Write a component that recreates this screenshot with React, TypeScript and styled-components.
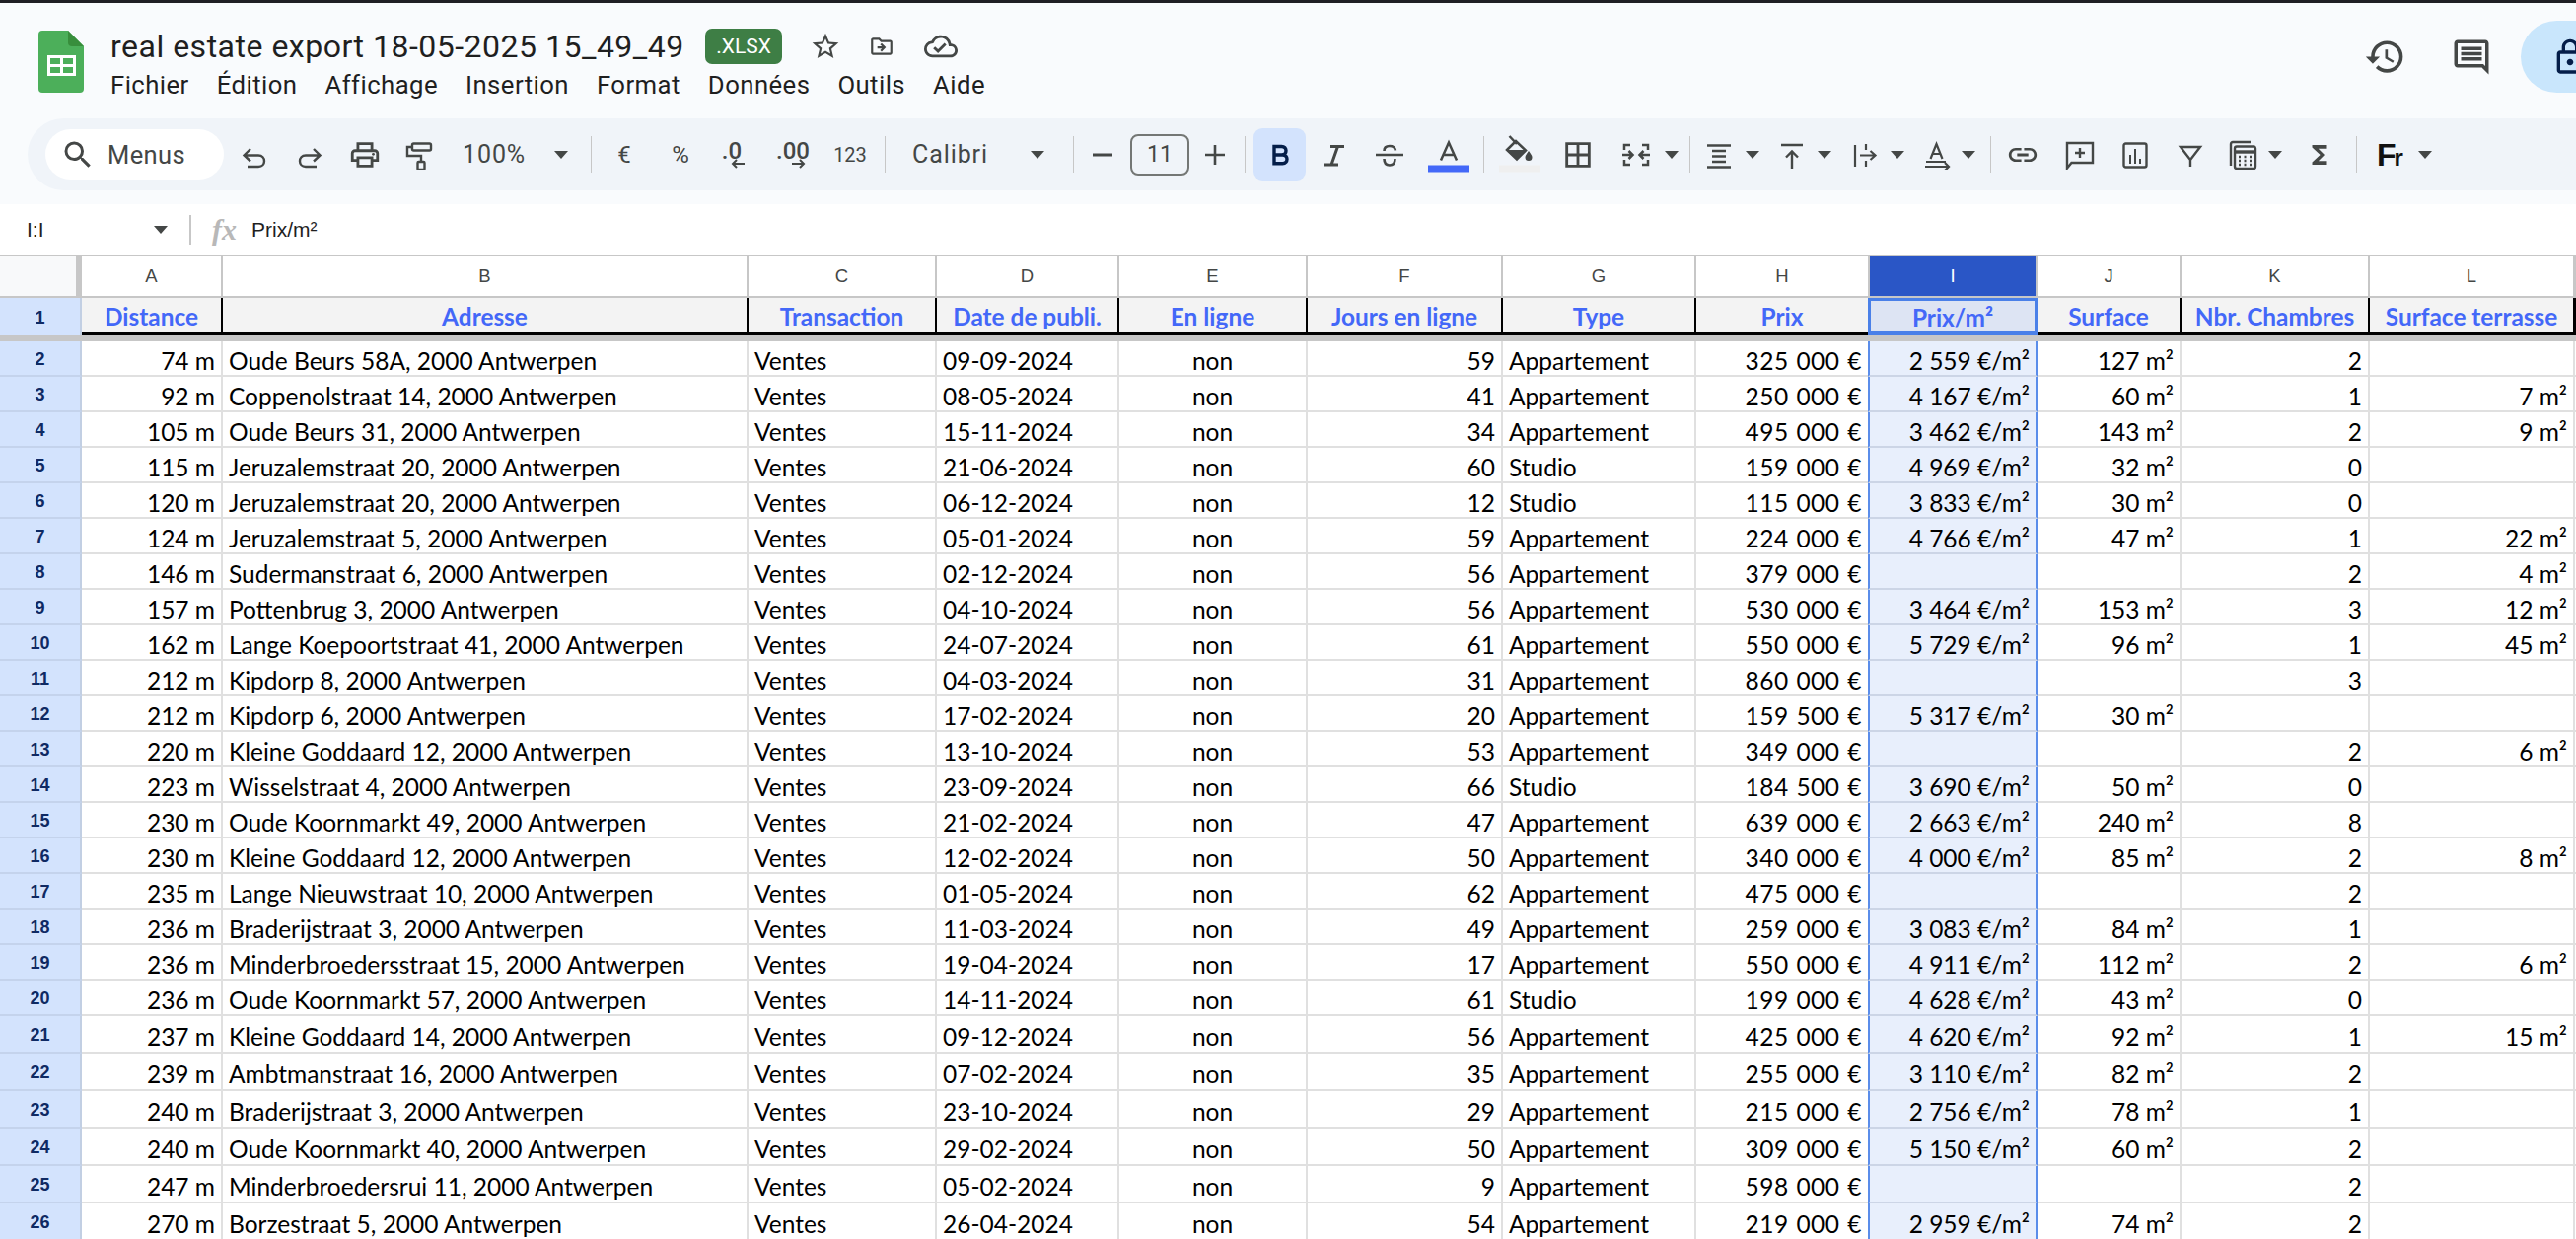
import React from 'react'
import styled, { createGlobalStyle } from 'styled-components'
import {
  MdHistory,
  MdLink,
  MdOutlineCloudDone,
  MdOutlineComment,
  MdOutlineDriveFileMove,
  MdOutlineLock,
  MdOutlinePrint,
  MdBorderAll,
  MdFunctions,
  MdSearch,
  MdStarBorder,
} from 'react-icons/md'

const UI_FONT = `Roboto, 'Liberation Sans', sans-serif`
const CELL_FONT = `Lato, 'Liberation Sans', sans-serif`
const ICON_COLOR = '#444746'
const GRID_COLUMNS = '83px 143px 533px 191px 185px 191px 198px 196px 176px 170px 146px 191px 208px 1fr'

const GlobalStyle = createGlobalStyle`
  html, body {
    margin: 0;
    padding: 0;
    background: #fff;
    overflow: hidden;
  }
`

const Page = styled.div`
  width: 2612px;
  height: 1256px;
  overflow: hidden;
  display: flex;
  flex-direction: column;
  background: #fff;
  border-top: 3px solid #1f1f24;
  box-sizing: border-box;
`

/* title bar */
const Header = styled.header`
  height: 117px;
  flex: none;
  display: flex;
  background: #f9fbfd;
  padding-left: 39px;
`

const LogoWrap = styled.div`
  margin-top: 28px;
  margin-right: 27px;
  width: 46px;
  height: 63px;
`

const TitleBlock = styled.div`
  padding-top: 26px;
  display: flex;
  flex-direction: column;
`

const TitleRow = styled.div`
  height: 36px;
  display: flex;
  align-items: center;
`

const Title = styled.div`
  width: 582px;
  margin-right: 21px;
  font: 400 32px ${UI_FONT};
  letter-spacing: 0.5px;
  color: #1f1f1f;
  white-space: nowrap;
`

const Chip = styled.div`
  width: 78px;
  height: 36px;
  border-radius: 7px;
  background: #3e7e45;
  color: #fff;
  font: 400 21px ${UI_FONT};
  display: flex;
  align-items: center;
  justify-content: center;
`

const TitleIcon = styled.div<{ $w: number }>`
  width: ${(p) => p.$w}px;
  display: flex;
  justify-content: center;
  color: ${ICON_COLOR};
  svg {
    display: block;
  }
`

const MenuRow = styled.nav`
  margin-top: 3px;
  height: 36px;
  display: flex;
  align-items: center;
  gap: 28px;
`

const MenuItem = styled.span`
  font: 400 25.7px ${UI_FONT};
  letter-spacing: 0.45px;
  color: #1f1f1f;
`

const HeaderRight = styled.div`
  margin-left: auto;
  display: flex;
  align-items: flex-start;
  padding-top: 18px;
`

const HeaderAction = styled.div<{ $w: number }>`
  width: ${(p) => p.$w}px;
  height: 73px;
  display: flex;
  align-items: center;
  justify-content: center;
  color: ${ICON_COLOR};
`

const SharePill = styled.div`
  width: 56px;
  height: 73px;
  padding-left: 30px;
  box-sizing: border-box;
  overflow: hidden;
  display: flex;
  align-items: center;
  border-radius: 37px 0 0 37px;
  background: #c9e6fc;
  color: #041e49;
  svg {
    flex: none;
  }
`

/* toolbar */
const ToolbarStrip = styled.div`
  height: 87px;
  flex: none;
  background: #f9fbfd;
  padding-left: 28px;
  box-sizing: border-box;
`

const Toolbar = styled.div`
  height: 73px;
  display: flex;
  align-items: center;
  background: #f0f4f9;
  border-radius: 37px 0 0 37px;
  padding-left: 18px;
  color: ${ICON_COLOR};
`

const SearchPill = styled.div`
  width: 181px;
  height: 51px;
  flex: none;
  margin-right: 3px;
  border-radius: 26px;
  background: #fff;
  display: flex;
  align-items: center;
  padding-left: 15px;
  gap: 12px;
  box-sizing: border-box;
  font: 400 25.5px ${UI_FONT};
  letter-spacing: 0.4px;
`

const Slot = styled.div<{ $w: number }>`
  width: ${(p) => p.$w}px;
  flex: none;
  display: flex;
  align-items: center;
  justify-content: center;
  svg {
    display: block;
  }
`

const Spacer = styled.div<{ $w: number }>`
  width: ${(p) => p.$w}px;
  flex: none;
`

const Separator = styled.div`
  width: 1px;
  height: 37px;
  flex: none;
  background: #c7c7c7;
`

const Caret = styled.div`
  width: 0;
  height: 0;
  flex: none;
  border-left: 7px solid transparent;
  border-right: 7px solid transparent;
  border-top: 8px solid ${ICON_COLOR};
`

const ToolText = styled.span<{ $size?: number; $weight?: number }>`
  font: ${(p) => p.$weight ?? 400} ${(p) => p.$size ?? 23}px ${UI_FONT};
  white-space: nowrap;
`

const Dropdown = styled.div<{ $w: number; $pad: number; $textW: number }>`
  width: ${(p) => p.$w}px;
  flex: none;
  display: flex;
  align-items: center;
  padding-left: ${(p) => p.$pad}px;
  box-sizing: border-box;
  font: 400 25px ${UI_FONT};
  letter-spacing: 0.9px;
  span {
    width: ${(p) => p.$textW}px;
    flex: none;
  }
`

const DecimalIcon = styled.div`
  display: flex;
  flex-direction: column;
  align-items: center;
  font: 500 24px/20px ${UI_FONT};
  svg {
    margin-top: -2px;
    margin-left: 12px;
  }
`

const SizeBox = styled.div`
  width: 60px;
  height: 42px;
  flex: none;
  border: 2px solid #747775;
  border-radius: 8px;
  box-sizing: border-box;
  display: flex;
  align-items: center;
  justify-content: center;
  font: 400 23px ${UI_FONT};
`

const ActiveSlot = styled.div`
  width: 53px;
  height: 53px;
  flex: none;
  border-radius: 9px;
  background: #d3e3fd;
  display: flex;
  align-items: center;
  justify-content: center;
  color: #041e49;
`

const AddonMark = styled.span`
  font: 900 32px/1 'Liberation Sans', sans-serif;
  color: #111;
  letter-spacing: -2px;
  span {
    font-size: 24px;
    font-weight: 700;
  }
`

/* formula bar */
const FormulaBar = styled.div`
  height: 51px;
  flex: none;
  display: flex;
  align-items: center;
  background: #fff;
  font: 400 21px 'Liberation Sans', sans-serif;
  color: #1f1f1f;
`

const NameBox = styled.div`
  width: 192px;
  flex: none;
  padding-left: 27px;
  padding-right: 22px;
  box-sizing: border-box;
  display: flex;
  align-items: center;
  justify-content: space-between;
`

const FormulaDivider = styled.div`
  width: 2px;
  height: 30px;
  background: #c7c7c7;
  flex: none;
`

const FxLabel = styled.span`
  width: 61px;
  flex: none;
  padding-left: 6px;
  box-sizing: border-box;
  text-align: center;
  font: italic 700 30px 'Liberation Serif', serif;
  color: #b8b8b8;
`

/* grid */
const Sheet = styled.div`
  flex: 1;
  min-height: 0;
  overflow: hidden;
  border-top: 2px solid #c7c7c7;
`

const GridRow = styled.div<{ $h: number }>`
  display: grid;
  grid-template-columns: ${GRID_COLUMNS};
  height: ${(p) => p.$h}px;
`

const Corner = styled.div`
  background: #f8f9fa;
  border-right: 6px solid #c7c7c7;
  border-bottom: 2px solid #c7c7c7;
`

const ColLetter = styled.div<{ $selected?: boolean }>`
  display: flex;
  align-items: center;
  justify-content: center;
  box-sizing: border-box;
  border-right: 2px solid #c7c7c7;
  border-bottom: 2px solid #c7c7c7;
  font: 400 18.5px 'Liberation Sans', sans-serif;
  color: ${(p) => (p.$selected ? '#fff' : '#444746')};
  background: ${(p) => (p.$selected ? '#2a56c6' : '#fff')};
`

const RowNumber = styled.div<{ $bare?: boolean }>`
  display: flex;
  align-items: center;
  justify-content: center;
  box-sizing: border-box;
  background: #d3e3fd;
  border-right: 2px solid #c2cfe3;
  border-bottom: ${(p) => (p.$bare ? 'none' : '2px solid #c4d3ec')};
  font: 700 18px 'Liberation Sans', sans-serif;
  color: #0f2a63;
  padding-top: 2px;
`

const HeadCell = styled.div<{ $selected?: boolean }>`
  display: flex;
  align-items: center;
  justify-content: center;
  box-sizing: border-box;
  padding-top: 2px;
  background: ${(p) => (p.$selected ? '#dde4f3' : '#f3f3f3')};
  border-right: 2px solid #000;
  border-bottom: 3px solid #000;
  font: 700 24.4px ${CELL_FONT};
  color: #4368f8;
  white-space: nowrap;
  ${(p) =>
    p.$selected &&
    `
    margin-left: -2px;
    border: 3px solid #4a80e8;
    border-bottom: 4px solid #4a80e8;
  `}
`

const FreezeBar = styled.div`
  height: 7px;
  background: #c7c7c7;
`

const Cell = styled.div<{ $align?: string; $selected?: boolean; $wide?: boolean }>`
  display: flex;
  align-items: center;
  justify-content: ${(p) => p.$align ?? 'flex-start'};
  box-sizing: border-box;
  padding: 4px 6px 0 6px;
  border-right: 2px solid #e0e0e0;
  border-bottom: 2px solid #e0e0e0;
  font: 400 24.5px ${CELL_FONT};
  letter-spacing: ${(p) => (p.$wide ? '0.5px' : '0')};
  word-spacing: ${(p) => (p.$wide ? '1px' : '0')};
  color: #000;
  white-space: nowrap;
  overflow: hidden;
  ${(p) =>
    p.$selected &&
    `
    margin-left: -2px;
    background: #e8effc;
    border-left: 2px solid #5a8dea;
    border-right: 2px solid #5a8dea;
    border-bottom-color: #ccd5e6;
  `}
`

/* drawn icons, 30 unit box unless noted */
const Glyph = ({
  children,
  w = 30,
  h = 30,
  sw = 2.4,
}: {
  children: React.ReactNode
  w?: number
  h?: number
  sw?: number
}) => (
  <svg
    width={w}
    height={h}
    viewBox={`0 0 ${w} ${h}`}
    fill="none"
    stroke="currentColor"
    strokeWidth={sw}
  >
    {children}
  </svg>
)

const SheetsLogo = () => (
  <svg width="46" height="63" viewBox="0 0 46 63">
    <path
      d="M4 0H30L46 16V59a4 4 0 0 1-4 4H4a4 4 0 0 1-4-4V4a4 4 0 0 1 4-4z"
      fill="#4caf5a"
    />
    <path d="M30 0L46 16H34a4 4 0 0 1-4-4z" fill="#388e3c" />
    <path
      d="M9 25H38V46H9z M12 28V34H22V28z M25 28V34H35V28z M12 37V43H22V37z M25 37V43H35V37z"
      fill="#fff"
      fillRule="evenodd"
    />
  </svg>
)

const UndoIcon = () => (
  <Glyph>
    <path d="M11 9L4.5 15.5L11 21.5M5 15.5H19C23 15.5 25 18.3 25 21.3C25 24.3 23 27 19 27H8" />
  </Glyph>
)

const RedoIcon = () => (
  <Glyph>
    <path d="M19 9L25.5 15.5L19 21.5M25 15.5H11C7 15.5 5 18.3 5 21.3C5 24.3 7 27 11 27H22" />
  </Glyph>
)

const PaintIcon = () => (
  <Glyph sw={2.4}>
    <rect x="7" y="3.5" width="19" height="7" rx="1.5" />
    <path d="M7 7H2V16H16V22" />
    <rect x="12.5" y="22" width="7" height="8" rx="1" />
  </Glyph>
)

const ArrowLeftSmall = () => (
  <Glyph w={16} h={10} sw={2}>
    <path d="M15 5H3M7 1L3 5L7 9" />
  </Glyph>
)

const ArrowRightSmall = () => (
  <Glyph w={16} h={10} sw={2}>
    <path d="M1 5H13M9 1L13 5L9 9" />
  </Glyph>
)

const BoldIcon = () => (
  <Glyph sw={3.4}>
    <path d="M9 6.5H16.5C19.5 6.5 21 8.5 21 10.8C21 13.2 19.5 15 16.5 15H9V6.5ZM9 15H17.5C20.5 15 22 17 22 19.3C22 21.7 20.5 23.7 17.5 23.7H9V15Z" />
  </Glyph>
)

const ItalicIcon = () => (
  <Glyph sw={3}>
    <path d="M11 6.5H25M5 25H19M18.5 6.5L12 25" />
  </Glyph>
)

const StrikeIcon = () => (
  <Glyph sw={2.6}>
    <path d="M1 15H29M9.5 11C9.5 7.5 12 6 15 6C18 6 20.5 7.5 21 10.5M9.5 19C9.5 23.5 12 25.5 15 25.5C18 25.5 20.5 23.5 20.5 19" />
  </Glyph>
)

const TextColorIcon = () => (
  <Glyph w={42} h={40} sw={2.5}>
    <path d="M13 25.5L21 7.5L29 25.5M16 20H26" />
    <rect x="0" y="30.5" width="42" height="7" fill="#4368f8" stroke="none" />
  </Glyph>
)

const FillIcon = () => (
  <Glyph w={42} h={40} sw={2.5}>
    <path d="M10.5 1L18 9" />
    <path d="M8 15L17 6L27 15.5L18 24.5Z" />
    <path d="M8 15H27L18 24.5Z" fill="currentColor" stroke="none" />
    <path
      d="M30 16C28 19 26.5 20.5 26.5 22.5A3.5 3.5 0 0 0 33.5 22.5C33.5 20.5 32 19 30 16Z"
      fill="currentColor"
      stroke="none"
    />
    <rect x="0" y="30.5" width="42" height="7" fill="#efefef" stroke="none" />
  </Glyph>
)

const MergeIcon = () => (
  <Glyph sw={2.5}>
    <path d="M3 10V5H9M21 5H27V10M3 20V25H9M21 25H27V20" />
    <path d="M1 15H11M7.5 11L11.5 15L7.5 19M29 15H19M22.5 11L18.5 15L22.5 19" />
  </Glyph>
)

const AlignIcon = () => (
  <Glyph sw={2.6}>
    <path d="M3 5.5H27M8 11H22M8 16.5H22M8 22H22M3 27.5H27" />
  </Glyph>
)

const ValignIcon = () => (
  <Glyph sw={2.4}>
    <path d="M4 5H26M15 29V11.5M9 17.5L15 11.5L21 17.5" />
  </Glyph>
)

const WrapIcon = () => (
  <Glyph sw={2.2}>
    <path d="M4 5V27M15 4V10M15 21V27M9 15.5H24M19.5 11L24.5 15.5L19.5 20" />
  </Glyph>
)

const RotateIcon = () => (
  <Glyph sw={2.2}>
    <path d="M8.5 19L14.5 4L20.5 19M10.5 14H18.5M4 22H24M3 27H27M23 23L27 27L23 31" />
  </Glyph>
)

const AddCommentIcon = () => (
  <Glyph sw={2.4}>
    <path d="M2 3H28V23H6.5L2 28.5Z" />
    <path d="M15 8V18M10 13H20" />
  </Glyph>
)

const ChartIcon = () => (
  <Glyph sw={2.4}>
    <rect x="3.5" y="3.5" width="23" height="24" rx="2" />
    <path d="M10 15V24M15 9V24M20 19V24" strokeWidth="2" />
  </Glyph>
)

const FilterIcon = () => (
  <Glyph sw={2.4}>
    <path d="M5 7H25L15 20ZM15 20V27" />
  </Glyph>
)

const CalcIcon = () => (
  <Glyph sw={2.4}>
    <path d="M2 26V4A2 2 0 0 1 4 2H22" />
    <rect x="6" y="6.5" width="21" height="22.5" rx="2" />
    <path d="M6 12H27" strokeWidth="3.4" />
    <path d="M10 17H12M15.5 17H17.5M21 17H23M10 21H12M15.5 21H17.5M21 21H23M10 25H12M15.5 25H17.5M21 25H23" strokeWidth="2.4" />
  </Glyph>
)

type Row = {
  n: number
  dist: string
  addr: string
  date: string
  online: string
  type: string
  price: string
  perM2: string
  surface: string
  rooms: string
  terrace: string
}

const r = (
  n: number,
  dist: string,
  addr: string,
  date: string,
  online: string,
  type: string,
  price: string,
  perM2: string,
  surface: string,
  rooms: string,
  terrace: string,
): Row => ({ n, dist, addr, date, online, type, price, perM2, surface, rooms, terrace })

const APT = 'Appartement'
const ROWS: Row[] = [
  r(2, '74', 'Oude Beurs 58A', '09-09-2024', '59', APT, '325 000', '2 559', '127', '2', ''),
  r(3, '92', 'Coppenolstraat 14', '08-05-2024', '41', APT, '250 000', '4 167', '60', '1', '7'),
  r(4, '105', 'Oude Beurs 31', '15-11-2024', '34', APT, '495 000', '3 462', '143', '2', '9'),
  r(5, '115', 'Jeruzalemstraat 20', '21-06-2024', '60', 'Studio', '159 000', '4 969', '32', '0', ''),
  r(6, '120', 'Jeruzalemstraat 20', '06-12-2024', '12', 'Studio', '115 000', '3 833', '30', '0', ''),
  r(7, '124', 'Jeruzalemstraat 5', '05-01-2024', '59', APT, '224 000', '4 766', '47', '1', '22'),
  r(8, '146', 'Sudermanstraat 6', '02-12-2024', '56', APT, '379 000', '', '', '2', '4'),
  r(9, '157', 'Pottenbrug 3', '04-10-2024', '56', APT, '530 000', '3 464', '153', '3', '12'),
  r(10, '162', 'Lange Koepoortstraat 41', '24-07-2024', '61', APT, '550 000', '5 729', '96', '1', '45'),
  r(11, '212', 'Kipdorp 8', '04-03-2024', '31', APT, '860 000', '', '', '3', ''),
  r(12, '212', 'Kipdorp 6', '17-02-2024', '20', APT, '159 500', '5 317', '30', '', ''),
  r(13, '220', 'Kleine Goddaard 12', '13-10-2024', '53', APT, '349 000', '', '', '2', '6'),
  r(14, '223', 'Wisselstraat 4', '23-09-2024', '66', 'Studio', '184 500', '3 690', '50', '0', ''),
  r(15, '230', 'Oude Koornmarkt 49', '21-02-2024', '47', APT, '639 000', '2 663', '240', '8', ''),
  r(16, '230', 'Kleine Goddaard 12', '12-02-2024', '50', APT, '340 000', '4 000', '85', '2', '8'),
  r(17, '235', 'Lange Nieuwstraat 10', '01-05-2024', '62', APT, '475 000', '', '', '2', ''),
  r(18, '236', 'Braderijstraat 3', '11-03-2024', '49', APT, '259 000', '3 083', '84', '1', ''),
  r(19, '236', 'Minderbroedersstraat 15', '19-04-2024', '17', APT, '550 000', '4 911', '112', '2', '6'),
  r(20, '236', 'Oude Koornmarkt 57', '14-11-2024', '61', 'Studio', '199 000', '4 628', '43', '0', ''),
  r(21, '237', 'Kleine Goddaard 14', '09-12-2024', '56', APT, '425 000', '4 620', '92', '1', '15'),
  r(22, '239', 'Ambtmanstraat 16', '07-02-2024', '35', APT, '255 000', '3 110', '82', '2', ''),
  r(23, '240', 'Braderijstraat 3', '23-10-2024', '29', APT, '215 000', '2 756', '78', '1', ''),
  r(24, '240', 'Oude Koornmarkt 40', '29-02-2024', '50', APT, '309 000', '5 150', '60', '2', ''),
  r(25, '247', 'Minderbroedersrui 11', '05-02-2024', '9', APT, '598 000', '', '', '2', ''),
  r(26, '270', 'Borzestraat 5', '26-04-2024', '54', APT, '219 000', '2 959', '74', '2', ''),
]

const LETTERS = ['A', 'B', 'C', 'D', 'E', 'F', 'G', 'H', 'I', 'J', 'K', 'L', '']
const HEADS = [
  'Distance',
  'Adresse',
  'Transaction',
  'Date de publi.',
  'En ligne',
  'Jours en ligne',
  'Type',
  'Prix',
  'Prix/m²',
  'Surface',
  'Nbr. Chambres',
  'Surface terrasse',
  '',
]
const MENUS = ['Fichier', 'Édition', 'Affichage', 'Insertion', 'Format', 'Données', 'Outils', 'Aide']

const withUnit = (value: string, unit: string) => (value ? `${value} ${unit}` : '')

export default function App() {
  return (
    <Page>
      <GlobalStyle />
      <Header>
        <LogoWrap>
          <SheetsLogo />
        </LogoWrap>
        <TitleBlock>
          <TitleRow>
            <Title>real estate export 18-05-2025 15_49_49</Title>
            <Chip>.XLSX</Chip>
            <TitleIcon $w={88}>
              <MdStarBorder size={32} />
            </TitleIcon>
            <TitleIcon $w={26}>
              <MdOutlineDriveFileMove size={32} />
            </TitleIcon>
            <TitleIcon $w={94}>
              <MdOutlineCloudDone size={34} />
            </TitleIcon>
          </TitleRow>
          <MenuRow>
            {MENUS.map((m) => (
              <MenuItem key={m}>{m}</MenuItem>
            ))}
          </MenuRow>
        </TitleBlock>
        <HeaderRight>
          <HeaderAction $w={76}>
            <MdHistory size={43} />
          </HeaderAction>
          <HeaderAction $w={100}>
            <MdOutlineComment size={42} />
          </HeaderAction>
          <SharePill>
            <MdOutlineLock size={40} />
          </SharePill>
        </HeaderRight>
      </Header>

      <ToolbarStrip>
        <Toolbar>
          <SearchPill>
            <MdSearch size={36} />
            Menus
          </SearchPill>
          <Slot $w={56}>
            <UndoIcon />
          </Slot>
          <Slot $w={56}>
            <RedoIcon />
          </Slot>
          <Slot $w={56}>
            <MdOutlinePrint size={34} />
          </Slot>
          <Slot $w={56}>
            <PaintIcon />
          </Slot>
          <Dropdown $w={145} $pad={15} $textW={93}>
            <span>100%</span>
            <Caret />
          </Dropdown>
          <Separator />
          <Slot $w={66}>
            <ToolText $size={24}>€</ToolText>
          </Slot>
          <Slot $w={48}>
            <ToolText $size={24}>%</ToolText>
          </Slot>
          <Slot $w={56}>
            <DecimalIcon>
              .0
              <ArrowLeftSmall />
            </DecimalIcon>
          </Slot>
          <Slot $w={68}>
            <DecimalIcon>
              .00
              <ArrowRightSmall />
            </DecimalIcon>
          </Slot>
          <Slot $w={48}>
            <ToolText $size={20}>123</ToolText>
          </Slot>
          <Spacer $w={11} />
          <Separator />
          <Dropdown $w={190} $pad={27} $textW={120}>
            <span>Calibri</span>
            <Caret />
          </Dropdown>
          <Separator />
          <Slot $w={57}>
            <Glyph sw={3}>
              <path d="M5 15H25" />
            </Glyph>
          </Slot>
          <SizeBox>11</SizeBox>
          <Slot $w={52}>
            <Glyph sw={2.6}>
              <path d="M5 15H25M15 5V25" />
            </Glyph>
          </Slot>
          <Spacer $w={4} />
          <Separator />
          <Spacer $w={8} />
          <ActiveSlot>
            <BoldIcon />
          </ActiveSlot>
          <Slot $w={58}>
            <ItalicIcon />
          </Slot>
          <Slot $w={54}>
            <StrikeIcon />
          </Slot>
          <Slot $w={66}>
            <TextColorIcon />
          </Slot>
          <Spacer $w={2} />
          <Separator />
          <Slot $w={72}>
            <FillIcon />
          </Slot>
          <Slot $w={46}>
            <MdBorderAll size={34} />
          </Slot>
          <Spacer $w={7} />
          <Slot $w={58}>
            <MergeIcon />
          </Slot>
          <Caret />
          <Spacer $w={11} />
          <Separator />
          <Spacer $w={2} />
          <Slot $w={54}>
            <AlignIcon />
          </Slot>
          <Caret />
          <Spacer $w={7} />
          <Slot $w={52}>
            <ValignIcon />
          </Slot>
          <Caret />
          <Spacer $w={10} />
          <Slot $w={50}>
            <WrapIcon />
          </Slot>
          <Caret />
          <Spacer $w={8} />
          <Slot $w={50}>
            <RotateIcon />
          </Slot>
          <Caret />
          <Spacer $w={15} />
          <Separator />
          <Slot $w={64}>
            <MdLink size={34} />
          </Slot>
          <Slot $w={52}>
            <AddCommentIcon />
          </Slot>
          <Slot $w={60}>
            <ChartIcon />
          </Slot>
          <Slot $w={52}>
            <FilterIcon />
          </Slot>
          <Spacer $w={3} />
          <Slot $w={50}>
            <CalcIcon />
          </Slot>
          <Caret />
          <Slot $w={75}>
            <MdFunctions size={30} />
          </Slot>
          <Separator />
          <Spacer $w={3} />
          <Slot $w={59}>
            <AddonMark>
              F<span>r</span>
            </AddonMark>
          </Slot>
          <Caret />
        </Toolbar>
      </ToolbarStrip>

      <FormulaBar>
        <NameBox>
          I:I
          <Caret />
        </NameBox>
        <FormulaDivider />
        <FxLabel>fx</FxLabel>
        Prix/m²
      </FormulaBar>

      <Sheet>
        <GridRow $h={42}>
          <Corner />
          {LETTERS.map((l, i) => (
            <ColLetter key={i} $selected={l === 'I'}>
              {l}
            </ColLetter>
          ))}
        </GridRow>
        <GridRow $h={37}>
          <RowNumber $bare>1</RowNumber>
          {HEADS.map((h, i) => (
            <HeadCell key={i} $selected={h === 'Prix/m²'}>
              {h}
            </HeadCell>
          ))}
        </GridRow>
        <FreezeBar />
        {ROWS.map((row) => (
          <GridRow key={row.n} $h={row.n > 20 ? 38 : 36}>
            <RowNumber>{row.n}</RowNumber>
            <Cell $align="flex-end">{row.dist} m</Cell>
            <Cell>{row.addr}, 2000 Antwerpen</Cell>
            <Cell>Ventes</Cell>
            <Cell>{row.date}</Cell>
            <Cell $align="center">non</Cell>
            <Cell $align="flex-end">{row.online}</Cell>
            <Cell>{row.type}</Cell>
            <Cell $align="flex-end" $wide>
              {withUnit(row.price, '€')}
            </Cell>
            <Cell $align="flex-end" $selected>
              {withUnit(row.perM2, '€/m²')}
            </Cell>
            <Cell $align="flex-end">{withUnit(row.surface, 'm²')}</Cell>
            <Cell $align="flex-end">{row.rooms}</Cell>
            <Cell $align="flex-end">{withUnit(row.terrace, 'm²')}</Cell>
            <Cell />
          </GridRow>
        ))}
      </Sheet>
    </Page>
  )
}
